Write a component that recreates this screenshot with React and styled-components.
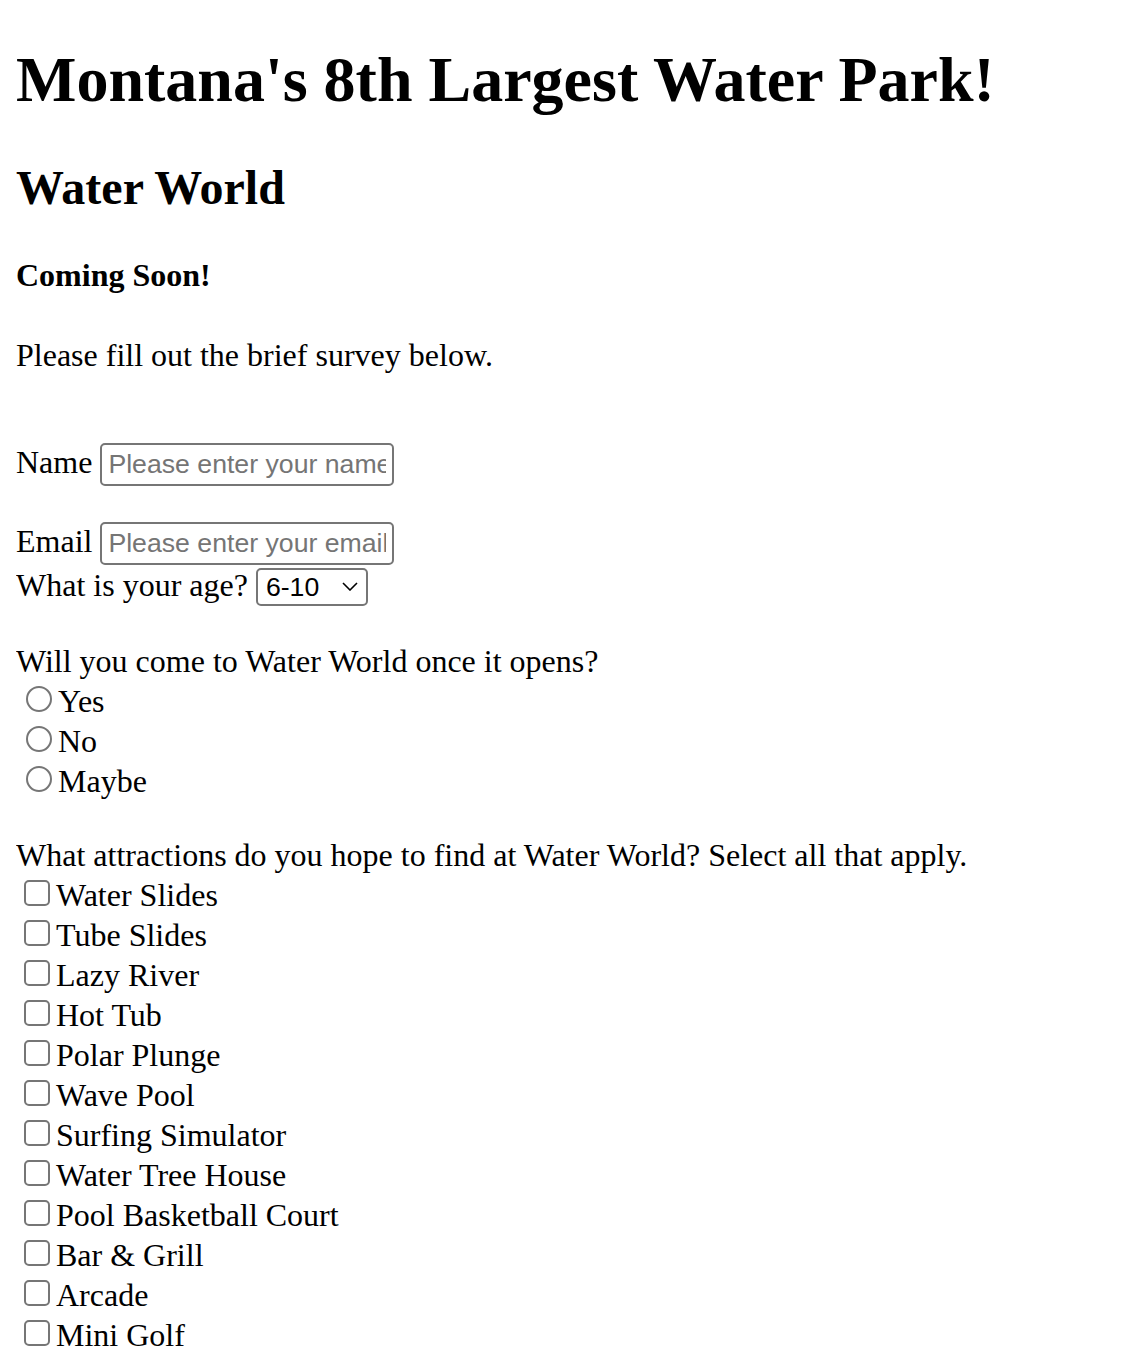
import React from 'react'
import styled, { createGlobalStyle } from 'styled-components'

// page is drawn at 2x the browser defaults
const GlobalStyle = createGlobalStyle`
  body {
    margin: 0 16px 16px;
    font-family: 'Liberation Serif', 'Times New Roman', serif;
    font-size: 32px;
    color: #000;
    background: #fff;
  }
`

const Title = styled.h1`
  font-size: 64px;
  font-weight: bold;
  margin: 42.88px 0;
`

const Subtitle = styled.h2`
  font-size: 48px;
  font-weight: bold;
  margin: 39.84px 0;
`

const Notice = styled.h4`
  font-size: 32px;
  font-weight: bold;
  margin: 42.56px 0;
`

const Intro = styled.p`
  margin: 32px 0;
`

const Survey = styled.form`
  padding-top: 36.8px;
`

const Line = styled.div`
  margin-top: ${p => (p.$above ? '36.8px' : '0')};
  margin-bottom: ${p => (p.$gap ? '36.8px' : '0')};
`

const TextInput = styled.input`
  box-sizing: border-box;
  width: 294px;
  height: 43px;
  padding: 2px 6px;
  margin: 0;
  border: 2px solid #767676;
  border-radius: 5px;
  font-family: 'Liberation Sans', Arial, sans-serif;
  font-size: 26.67px;
  color: #000;
  background: #fff;
  outline: none;
  &::placeholder {
    color: #757575;
  }
`

const SelectWrap = styled.span`
  position: relative;
  display: inline-block;
  margin-top: 2px;
`

const AgeSelect = styled.select`
  appearance: none;
  box-sizing: border-box;
  width: 112px;
  height: 38px;
  margin: 0;
  padding: 0 0 0 8px;
  border: 2px solid #767676;
  border-radius: 5px;
  font-family: 'Liberation Sans', Arial, sans-serif;
  font-size: 26.67px;
  color: #000;
  background: #fff;
`

const Chevron = styled.svg`
  position: absolute;
  right: 10px;
  top: 15px;
  width: 16px;
  height: 9px;
  pointer-events: none;
`

const Option = styled.div``

const Radio = styled.input`
  appearance: none;
  box-sizing: border-box;
  width: 26px;
  height: 26px;
  margin: 6px 6px 0 10px;
  border: 2px solid #767676;
  border-radius: 50%;
  background: #fff;
  vertical-align: baseline;
`

const Check = styled.input`
  appearance: none;
  box-sizing: border-box;
  width: 26px;
  height: 26px;
  margin: 6px 6px 0 8px;
  border: 2px solid #767676;
  border-radius: 5px;
  background: #fff;
  vertical-align: baseline;
`

const attractions = [
  'Water Slides',
  'Tube Slides',
  'Lazy River',
  'Hot Tub',
  'Polar Plunge',
  'Wave Pool',
  'Surfing Simulator',
  'Water Tree House',
  'Pool Basketball Court',
  'Bar & Grill',
  'Arcade',
  'Mini Golf',
]

export default function App() {
  return (
    <>
      <GlobalStyle />
      <Title>Montana's 8th Largest Water Park!</Title>
      <Subtitle>Water World</Subtitle>
      <Notice>Coming Soon!</Notice>
      <Intro>Please fill out the brief survey below.</Intro>
      <Survey>
        <Line $gap>
          <label htmlFor="name">Name</label>{' '}
          <TextInput id="name" type="text" placeholder="Please enter your name" />
        </Line>
        <Line>
          <label htmlFor="email">Email</label>{' '}
          <TextInput id="email" type="email" placeholder="Please enter your email" />
        </Line>
        <Line $gap>
          <label htmlFor="age">What is your age?</label>{' '}
          <SelectWrap>
            <AgeSelect id="age" defaultValue="6-10">
              <option>0-5</option>
              <option>6-10</option>
              <option>11-17</option>
              <option>18-30</option>
              <option>31+</option>
            </AgeSelect>
            <Chevron viewBox="0 0 16 9">
              <path d="M1 1 L8 8 L15 1" fill="none" stroke="#000" strokeWidth="1.6" />
            </Chevron>
          </SelectWrap>
        </Line>
        <Line>Will you come to Water World once it opens?</Line>
        {['Yes', 'No', 'Maybe'].map(v => (
          <Option key={v}>
            <Radio type="radio" name="visit" id={v} />
            <label htmlFor={v}>{v}</label>
          </Option>
        ))}
        <Line $above>
          What attractions do you hope to find at Water World? Select all that apply.
        </Line>
        {attractions.map(a => (
          <Option key={a}>
            <Check type="checkbox" id={a} />
            <label htmlFor={a}>{a}</label>
          </Option>
        ))}
      </Survey>
    </>
  )
}
